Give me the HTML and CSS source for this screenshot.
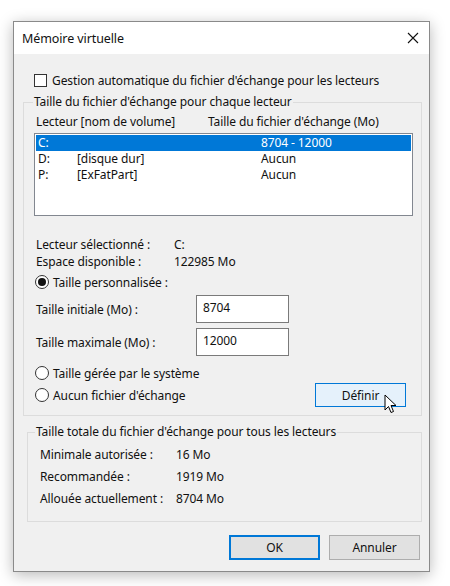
FILE: index.html
```html
<!DOCTYPE html>
<html lang="fr">
<head>
<meta charset="utf-8">
<title>Mémoire virtuelle</title>
<link rel="stylesheet" href="styles.css">
</head>
<body>
<div class="dialog">
  <div class="titlebar">
    <span class="title">Mémoire virtuelle</span>
    <svg class="close" width="12" height="12" viewBox="0 0 12 12"><path d="M1 1 L11 11 M11 1 L1 11" stroke="#111" stroke-width="1.1" fill="none"/></svg>
  </div>
  <div class="content">
    <div class="check-row">
      <span class="checkbox"></span>
      <span>Gestion automatique du fichier d'échange pour les lecteurs</span>
    </div>

    <fieldset class="group group-drives">
      <legend>Taille du fichier d'échange pour chaque lecteur</legend>
      <div class="col-head">
        <span class="ch1">Lecteur [nom de volume]</span>
        <span>Taille du fichier d'échange (Mo)</span>
      </div>
      <div class="listbox">
        <div class="lrow selected"><span class="c1">C:</span><span class="c2"></span><span>8704 - 12000</span></div>
        <div class="lrow"><span class="c1">D:</span><span class="c2">[disque dur]</span><span>Aucun</span></div>
        <div class="lrow"><span class="c1">P:</span><span class="c2">[ExFatPart]</span><span>Aucun</span></div>
      </div>
      <div class="info first"><span class="ilabel">Lecteur sélectionné :</span><span>C:</span></div>
      <div class="info"><span class="ilabel">Espace disponible :</span><span>122985 Mo</span></div>
      <div class="radio-row perso"><span class="radio checked"></span><span>Taille personnalisée :</span></div>
      <div class="field-row first-field"><span class="flabel">Taille initiale (Mo) :</span><span class="input">8704</span></div>
      <div class="field-row"><span class="flabel">Taille maximale (Mo) :</span><span class="input">12000</span></div>
      <div class="radio-row system"><span class="radio"></span><span>Taille gérée par le système</span></div>
      <div class="last-row">
        <div class="radio-row"><span class="radio"></span><span>Aucun fichier d'échange</span></div>
        <div class="btn-wrap">
          <span class="btn hover">Définir</span>
          <svg class="cursor" width="14" height="21" viewBox="0 0 14 21"><path d="M1 1 L1 16 L4.5 12.5 L7 18.5 L9.5 17.5 L7 11.5 L12 11.5 Z" fill="#fff" stroke="#000" stroke-width="1" stroke-linejoin="round"/></svg>
        </div>
      </div>
    </fieldset>

    <fieldset class="group group-total">
      <legend>Taille totale du fichier d'échange pour tous les lecteurs</legend>
      <div class="trow first"><span class="tlabel">Minimale autorisée :</span><span>16 Mo</span></div>
      <div class="trow"><span class="tlabel">Recommandée :</span><span>1919 Mo</span></div>
      <div class="trow"><span class="tlabel">Allouée actuellement :</span><span>8704 Mo</span></div>
    </fieldset>

    <div class="buttons">
      <span class="btn default">OK</span>
      <span class="btn">Annuler</span>
    </div>
  </div>
</div>
</body>
</html>
```
FILE: styles.css
```css
* { box-sizing: border-box; }
html, body { margin: 0; padding: 0; background: #fff; }
body {
  font-family: "Noto Sans", "Liberation Sans", sans-serif;
  font-size: 12px;
  letter-spacing: -0.1px;
  color: #111;
  width: 450px;
  height: 586px;
  overflow: hidden;
}
.dialog {
  margin: 21px 0 0 13px;
  width: 417px;
  height: 551px;
  border: 1px solid #8a8a8a;
  background: #f0f0f0;
  box-shadow: 0 3px 14px rgba(0,0,0,0.28);
  display: flex;
  flex-direction: column;
}
.titlebar {
  height: 32px;
  background: #fff;
  display: flex;
  align-items: center;
  justify-content: space-between;
  padding: 0 10px 0 8px;
}
.title { font-size: 12.5px; }
.close { display: block; }
.content {
  flex: 1;
  padding: 0 7px 0 9px;
  display: flex;
  flex-direction: column;
}
.check-row {
  margin-top: 18px;
  height: 16px;
  display: flex;
  align-items: center;
  padding-left: 11px;
}
.checkbox {
  width: 13px; height: 13px;
  border: 1px solid #333;
  background: #fff;
  margin-right: 5px;
}
.group {
  margin: 0;
  border: 1px solid #dcdcdc;
  padding: 0;
  min-width: 0;
}
.group legend {
  padding: 0 1px;
  height: 16px;
  line-height: 16px;
}
.group-drives {
  margin-top: 6px;
  padding: 0 8px 8px 10px;
}
.group-drives legend { margin-left: -1px; }
.col-head {
  margin-top: 4px;
  height: 16px;
  line-height: 16px;
  display: flex;
  padding-left: 2px;
}
.ch1 { width: 172px; }
.listbox {
  margin-top: 3px;
  height: 83px;
  width: 379px;
  border: 1px solid #828790;
  background: #fff;
  padding: 1px;
}
.lrow {
  height: 16px;
  line-height: 16px;
  display: flex;
  padding-left: 2px;
}
.lrow.selected { background: #0078d7; color: #fff; }
.c1 { width: 39px; }
.c2 { width: 184px; }
.info {
  height: 17px;
  line-height: 17px;
  display: flex;
  padding-left: 2px;
}
.info.first { margin-top: 20px; }
.ilabel { width: 138px; }
.radio-row {
  height: 16px;
  display: flex;
  align-items: center;
  padding-left: 1px;
}
.radio-row.perso { margin-top: 4px; }
.radio-row.system { margin-top: 9px; }
.radio {
  width: 14px; height: 14px;
  border: 1px solid #333;
  border-radius: 50%;
  background: #fff;
  margin-right: 4px;
  display: flex;
  align-items: center;
  justify-content: center;
}
.radio.checked::after {
  content: "";
  width: 8px; height: 8px;
  border-radius: 50%;
  background: #111;
}
.field-row {
  margin-top: 5px;
  height: 28px;
  display: flex;
  align-items: center;
  padding-left: 2px;
}
.field-row.first-field { margin-top: 5px; }
.flabel { width: 160px; }
.input {
  width: 93px;
  height: 28px;
  border: 1px solid #7a7a7a;
  background: #fff;
  padding: 4px 0 0 6px;
  line-height: 16px;
}
.last-row {
  margin-top: 2px;
  height: 24px;
  display: flex;
  align-items: center;
  justify-content: space-between;
  padding-right: 7px;
}
.btn-wrap { position: relative; }
.btn {
  display: flex;
  align-items: center;
  justify-content: center;
  width: 91px;
  height: 25px;
  background: #e1e1e1;
  border: 1px solid #adadad;
}
.btn.hover {
  height: 24px;
  background: #e5f1fb;
  border: 1px solid #0078d7;
}
.btn.default { border: 2px solid #0078d7; }
.cursor {
  position: absolute;
  left: 69px;
  top: 11px;
}
.group-total {
  margin: 8px 0 0 4px;
  padding: 0 8px 11px 12px;
}
.group-total legend { margin-left: -5px; }
.trow {
  height: 22px;
  line-height: 22px;
  display: flex;
}
.trow.first { margin-top: 4px; }
.tlabel { width: 136px; }
.buttons {
  margin-top: 13px;
  display: flex;
  justify-content: flex-end;
  gap: 9px;
  padding-right: 2px;
}
```
